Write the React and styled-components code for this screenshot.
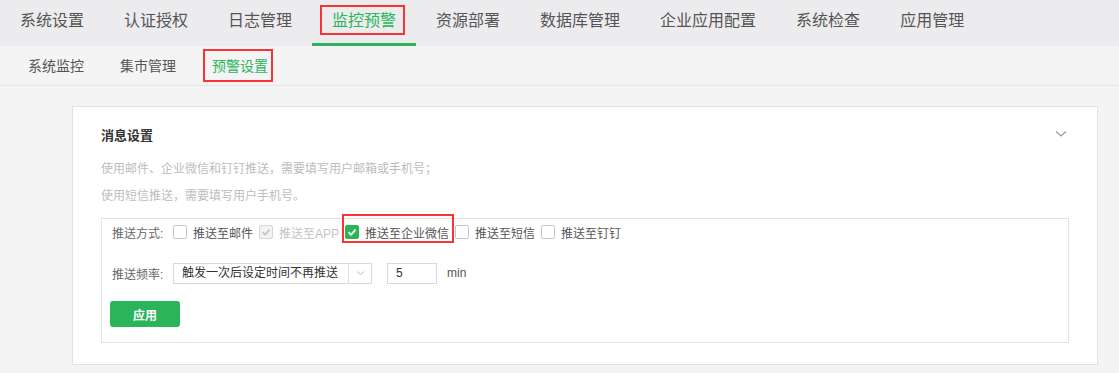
import React from "react";
import styled, { createGlobalStyle } from "styled-components";

const GREEN = "#2bb55b";
const FONT = '"Liberation Sans", "Noto Sans CJK SC", sans-serif';

const Global = createGlobalStyle`
  html, body { margin: 0; padding: 0; }
  body {
    width: 1119px;
    height: 373px;
    overflow: hidden;
    background: #f4f4f4;
    font-family: ${FONT};
  }
  * { box-sizing: border-box; }
`;

const Page = styled.div`
  display: flex;
  flex-direction: column;
  min-height: 373px;
  background: #f4f4f4;
`;

const TopNav = styled.nav`
  display: flex;
  height: 46px;
  background: #ececee;
`;

const TopTab = styled.div`
  position: relative;
  display: flex;
  align-items: center;
  padding: 0 20px 5px;
  font-size: 16px;
  color: ${(p) => (p.$active ? GREEN : "#555")};
  border-bottom: 3px solid ${(p) => (p.$active ? GREEN : "transparent")};
  white-space: nowrap;
`;

const Mark = styled.span`
  position: absolute;
  border: 2px solid #f53535;
  pointer-events: none;
  left: ${(p) => p.$l}px;
  top: ${(p) => p.$t}px;
  width: ${(p) => p.$w}px;
  height: ${(p) => p.$h}px;
`;

const SubNav = styled.nav`
  display: flex;
  height: 40px;
  padding-left: 10px;
  background: #f4f4f4;
  border-bottom: 1px solid #e6e6e6;
`;

const SubTab = styled.div`
  position: relative;
  display: flex;
  align-items: center;
  padding: 0 18px 2px;
  font-size: 14px;
  color: ${(p) => (p.$active ? GREEN : "#555")};
`;

const Main = styled.main`
  padding: 20px 21px 10px 72px;
`;

const Card = styled.section`
  background: #fff;
  border: 1px solid #e3e3e3;
  padding: 17px 28px 21px 28px;
`;

const CardHead = styled.div`
  display: flex;
  align-items: center;
  justify-content: space-between;
  height: 20px;
`;

const Title = styled.h3`
  margin: 0;
  font-size: 13px;
  font-weight: bold;
  color: #333;
`;

const Chevron = styled.svg`
  width: 12px;
  height: 8px;
  margin-right: 2px;
`;

const Desc = styled.p`
  margin: ${(p) => (p.$first ? "15px" : "7px")} 0 0;
  line-height: 20px;
  font-size: 12px;
  color: #bdbdbd;
`;

const Box = styled.div`
  margin-top: 12px;
  border: 1px solid #e3e3e3;
  padding: 3px 10px 15px;
  display: flex;
  flex-direction: column;
`;

const Row = styled.div`
  display: flex;
  align-items: center;
  height: ${(p) => p.$h}px;
  margin-top: ${(p) => p.$mt || 0}px;
  font-size: 12px;
`;

const Label = styled.span`
  color: #666;
  width: 61px;
  flex-shrink: 0;
`;

const Check = styled.label`
  position: relative;
  display: flex;
  align-items: center;
  gap: 6px;
  margin-right: 6px;
  color: ${(p) => (p.$disabled ? "#c4c4c4" : "#555")};
  white-space: nowrap;
`;

const Square = styled.span`
  display: flex;
  align-items: center;
  justify-content: center;
  width: 14px;
  height: 14px;
  border-radius: 2px;
  border: 1px solid
    ${(p) => (p.$checked && !p.$disabled ? GREEN : p.$disabled ? "#d6d6d6" : "#c6c6c6")};
  background: ${(p) => (p.$checked && !p.$disabled ? GREEN : p.$disabled ? "#f2f2f2" : "#fff")};
`;

const Select = styled.div`
  display: flex;
  width: 199px;
  height: 21px;
  border: 1px solid #d9d9d9;
  background: #fff;
`;

const SelectText = styled.span`
  flex: 1;
  padding-left: 8px;
  line-height: 19px;
  color: #333;
  white-space: nowrap;
`;

const SelectArrow = styled.span`
  width: 23px;
  border-left: 1px solid #e0e0e0;
  display: flex;
  align-items: center;
  justify-content: center;
`;

const NumInput = styled.div`
  width: 50px;
  height: 21px;
  margin-left: 15px;
  border: 1px solid #d9d9d9;
  padding-left: 8px;
  line-height: 19px;
  color: #333;
`;

const Unit = styled.span`
  margin-left: 10px;
  color: #555;
`;

const Button = styled.button`
  width: 70px;
  height: 26px;
  margin-top: 17px;
  margin-left: -2px;
  border: none;
  border-radius: 3px;
  background: ${GREEN};
  color: #fff;
  font-family: ${FONT};
  font-size: 12px;
  font-weight: bold;
`;

const CheckIcon = ({ color }) => (
  <svg width="10" height="10" viewBox="0 0 10 10">
    <polyline points="1.5,5.2 4,7.6 8.6,2.6" fill="none" stroke={color} strokeWidth="1.8" />
  </svg>
);

const CheckItem = ({ label, checked, disabled, mark }) => (
  <Check $disabled={disabled}>
    <Square $checked={checked} $disabled={disabled}>
      {checked && <CheckIcon color={disabled ? "#c8c8c8" : "#fff"} />}
    </Square>
    {label}
    {mark && <Mark $l={-3} $t={-10} $w={112} $h={29} />}
  </Check>
);

const topTabs = ["系统设置", "认证授权", "日志管理", "监控预警", "资源部署", "数据库管理", "企业应用配置", "系统检查", "应用管理"];
const subTabs = ["系统监控", "集市管理", "预警设置"];

export default function App() {
  return (
    <Page>
      <Global />
      <TopNav>
        {topTabs.map((t) => (
          <TopTab key={t} $active={t === "监控预警"}>
            {t}
            {t === "监控预警" && <Mark $l={8} $t={5} $w={85} $h={30} />}
          </TopTab>
        ))}
      </TopNav>
      <SubNav>
        {subTabs.map((t) => (
          <SubTab key={t} $active={t === "预警设置"}>
            {t}
            {t === "预警设置" && <Mark $l={9} $t={3} $w={70} $h={33} />}
          </SubTab>
        ))}
      </SubNav>
      <Main>
        <Card>
          <CardHead>
            <Title>消息设置</Title>
            <Chevron viewBox="0 0 12 8">
              <polyline points="1,1.5 6,6 11,1.5" fill="none" stroke="#999" strokeWidth="1.3" />
            </Chevron>
          </CardHead>
          <Desc $first>使用邮件、企业微信和钉钉推送，需要填写用户邮箱或手机号；</Desc>
          <Desc>使用短信推送，需要填写用户手机号。</Desc>
          <Box>
            <Row $h={20}>
              <Label>推送方式:</Label>
              <CheckItem label="推送至邮件" />
              <CheckItem label="推送至APP" checked disabled />
              <CheckItem label="推送至企业微信" checked mark />
              <CheckItem label="推送至短信" />
              <CheckItem label="推送至钉钉" />
            </Row>
            <Row $h={22} $mt={20}>
              <Label>推送频率:</Label>
              <Select>
                <SelectText>触发一次后设定时间不再推送</SelectText>
                <SelectArrow>
                  <svg width="9" height="6" viewBox="0 0 9 6">
                    <polyline points="1,1.5 4.5,4.5 8,1.5" fill="none" stroke="#bbb" strokeWidth="1" />
                  </svg>
                </SelectArrow>
              </Select>
              <NumInput>5</NumInput>
              <Unit>min</Unit>
            </Row>
            <Row $h={43}>
              <Button>应用</Button>
            </Row>
          </Box>
        </Card>
      </Main>
    </Page>
  );
}
